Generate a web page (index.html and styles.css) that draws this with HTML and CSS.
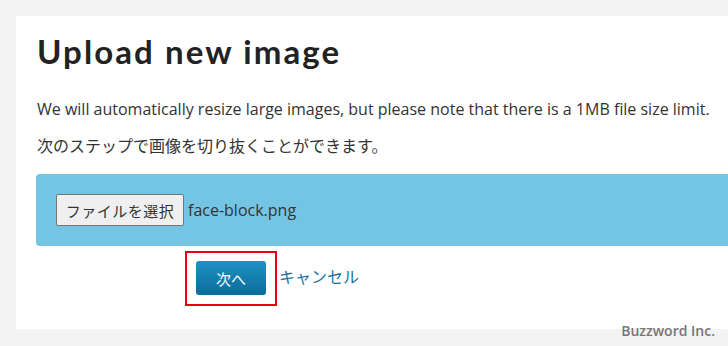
FILE: index.html
```html
<!DOCTYPE html>
<html lang="ja">
<head>
<meta charset="utf-8">
<link rel="stylesheet" href="styles.css">
</head>
<body>
<div class="panel">
  <h1 class="title">Upload new image</h1>
  <p class="note">We will automatically resize large images, but please note that there is a 1MB file size limit.</p>
  <p class="note jp">次のステップで画像を切り抜くことができます。</p>
  <div class="upload">
    <span class="file-btn">ファイルを選択</span><span class="file-name">face-block.png</span>
  </div>
  <div class="actions">
    <div class="highlight"><span class="next-btn">次へ</span></div>
    <a class="cancel" href="#">キャンセル</a>
  </div>
</div>
<div class="watermark">Buzzword Inc.</div>
</body>
</html>
```
FILE: styles.css
```css
html, body {
  margin: 0;
  padding: 0;
}
body {
  background: #f3f3f3;
  width: 728px;
  height: 346px;
  overflow: hidden;
  position: relative;
  font-family: "Open Sans", "Noto Sans CJK JP", sans-serif;
  color: #333;
}
.panel {
  margin: 16px 0 0 16px;
  width: 712px;
  height: 313px;
  background: #fff;
  box-sizing: border-box;
  padding: 15px 0 0 20px;
}
.title {
  margin: 0;
  font-family: "Lato", sans-serif;
  font-weight: 700;
  font-size: 33px;
  line-height: 40px;
  color: #222;
  padding-left: 1px;
  letter-spacing: 2.1px;
}
.note {
  margin: 27px 0 0;
  font-size: 16px;
  line-height: 22px;
  padding-left: 1px;
}
.note.jp {
  margin-top: 14px;
  font-family: "Noto Sans CJK JP", sans-serif;
}
.upload {
  margin-top: 18px;
  height: 72px;
  background: #74c4e3;
  border-radius: 4px 0 0 4px;
  box-sizing: border-box;
  padding: 20px 0 0 20px;
  display: flex;
  align-items: flex-start;
}
.file-btn {
  box-sizing: border-box;
  width: 128px;
  height: 32px;
  display: flex;
  align-items: center;
  justify-content: center;
  background: #efefef;
  border: 1px solid #767676;
  border-radius: 2px;
  font-family: "Noto Sans CJK JP", sans-serif;
  font-size: 15px;
  color: #333;
  letter-spacing: 0.5px;
}
.file-name {
  margin-left: 4px;
  line-height: 32px;
  font-size: 16px;
  color: #333;
}
.actions {
  margin-top: 5px;
  margin-left: 149px;
  display: flex;
  align-items: center;
}
.highlight {
  box-sizing: border-box;
  width: 92px;
  height: 55px;
  border: 2px solid #e60012;
  padding: 8px 0 0 9px;
}
.next-btn {
  display: flex;
  align-items: center;
  justify-content: center;
  width: 70px;
  height: 34px;
  border-radius: 3px;
  background: linear-gradient(#1f93c3, #0b6b9b);
  color: #fff;
  font-family: "Noto Sans CJK JP", sans-serif;
  font-size: 15px;
}
.cancel {
  margin-left: 2px;
  margin-top: -5px;
  font-family: "Noto Sans CJK JP", sans-serif;
  font-size: 16px;
  color: #1d6fa5;
  text-decoration: none;
}
.watermark {
  position: absolute;
  right: 13px;
  bottom: 6px;
  font-family: "Open Sans", sans-serif;
  font-weight: 600;
  font-size: 14px;
  color: #777;
}
```
